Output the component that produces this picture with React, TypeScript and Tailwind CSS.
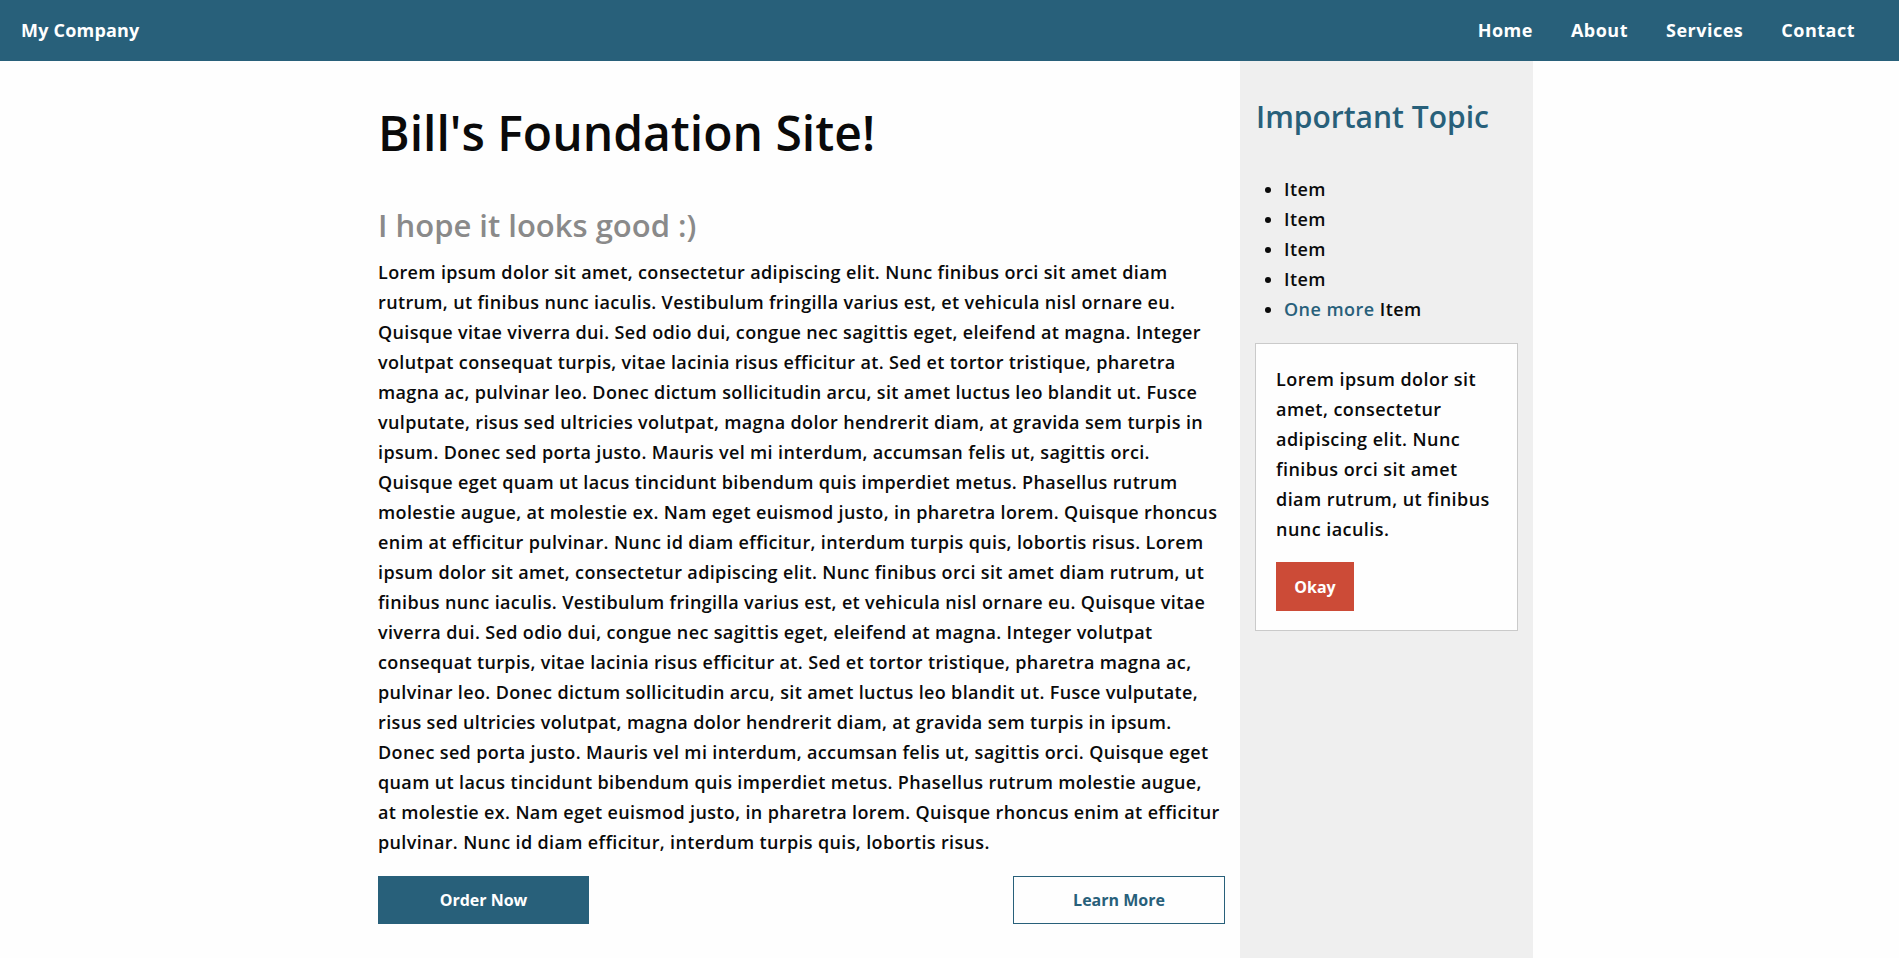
import React from "react";

const navLinks = ["Home", "About", "Services", "Contact"];

const body =
  "Lorem ipsum dolor sit amet, consectetur adipiscing elit. Nunc finibus orci sit amet diam rutrum, ut finibus nunc iaculis. Vestibulum fringilla varius est, et vehicula nisl ornare eu. Quisque vitae viverra dui. Sed odio dui, congue nec sagittis eget, eleifend at magna. Integer volutpat consequat turpis, vitae lacinia risus efficitur at. Sed et tortor tristique, pharetra magna ac, pulvinar leo. Donec dictum sollicitudin arcu, sit amet luctus leo blandit ut. Fusce vulputate, risus sed ultricies volutpat, magna dolor hendrerit diam, at gravida sem turpis in ipsum. Donec sed porta justo. Mauris vel mi interdum, accumsan felis ut, sagittis orci. Quisque eget quam ut lacus tincidunt bibendum quis imperdiet metus. Phasellus rutrum molestie augue, at molestie ex. Nam eget euismod justo, in pharetra lorem. Quisque rhoncus enim at efficitur pulvinar. Nunc id diam efficitur, interdum turpis quis, lobortis risus. Lorem ipsum dolor sit amet, consectetur adipiscing elit. Nunc finibus orci sit amet diam rutrum, ut finibus nunc iaculis. Vestibulum fringilla varius est, et vehicula nisl ornare eu. Quisque vitae viverra dui. Sed odio dui, congue nec sagittis eget, eleifend at magna. Integer volutpat consequat turpis, vitae lacinia risus efficitur at. Sed et tortor tristique, pharetra magna ac, pulvinar leo. Donec dictum sollicitudin arcu, sit amet luctus leo blandit ut. Fusce vulputate, risus sed ultricies volutpat, magna dolor hendrerit diam, at gravida sem turpis in ipsum. Donec sed porta justo. Mauris vel mi interdum, accumsan felis ut, sagittis orci. Quisque eget quam ut lacus tincidunt bibendum quis imperdiet metus. Phasellus rutrum molestie augue, at molestie ex. Nam eget euismod justo, in pharetra lorem. Quisque rhoncus enim at efficitur pulvinar. Nunc id diam efficitur, interdum turpis quis, lobortis risus.";

export default function App() {
  return (
    <div className="min-h-screen bg-[#fefefe] font-['Open_Sans',sans-serif] text-[#0a0a0a]">
      <nav className="flex h-[61px] items-center justify-between bg-[#28607a] pl-[21px] pr-[25px] text-white">
        <a href="#" className="text-[18px] font-bold tracking-[0.2px]">
          My Company
        </a>
        <ul className="flex">
          {navLinks.map((link) => (
            <li key={link}>
              <a href="#" className="px-[19px] text-[18px] font-bold tracking-[0.5px]">
                {link}
              </a>
            </li>
          ))}
        </ul>
      </nav>

      <div className="flex pl-[378px]">
        <main className="w-[847px] pt-[43px] pb-[30px]">
          <h1 className="text-[48px] leading-[1.2] font-semibold">Bill's Foundation Site!</h1>
          <h2 className="mt-[45px] text-[31px] leading-[1.2] font-semibold text-[#8a8a8a]">I hope it looks good :)</h2>
          <p className="mt-[13px] text-[18px] leading-[30px] font-semibold tracking-[0.36px]">{body}</p>
          <div className="mt-[19px] flex justify-between">
            <a href="#" className="flex h-[48px] w-[211px] items-center justify-center bg-[#28607a] text-[16px] font-bold text-white">
              Order Now
            </a>
            <a href="#" className="flex h-[48px] w-[212px] items-center justify-center border border-[#28607a] text-[16px] font-bold text-[#28607a]">
              Learn More
            </a>
          </div>
        </main>

        <aside className="ml-[15px] min-h-[calc(100vh-61px)] w-[293px] bg-[#efefef] px-[15px] pt-[38px]">
          <h3 className="pl-[1px] text-[30px] leading-[1.2] font-semibold text-[#28607a]">Important Topic</h3>
          <ul className="mt-[39px] list-disc pl-[29px] text-[18px] leading-[30px] font-semibold tracking-[0.45px]">
            <li>Item</li>
            <li>Item</li>
            <li>Item</li>
            <li>Item</li>
            <li>
              <a href="#" className="text-[#28607a]">One more</a> Item
            </li>
          </ul>
          <div className="mt-[19px] border border-[#cacaca] bg-[#fefefe] px-[20px] pt-[20px] pb-[19px]">
            <p className="text-[18px] leading-[30px] font-semibold tracking-[0.45px]">
              Lorem ipsum dolor sit amet, consectetur adipiscing elit. Nunc finibus orci sit amet diam rutrum, ut finibus nunc iaculis.
            </p>
            <button className="mt-[18px] h-[49px] w-[78px] bg-[#cc4b37] text-[16px] font-bold text-white">Okay</button>
          </div>
        </aside>
      </div>
    </div>
  );
}
